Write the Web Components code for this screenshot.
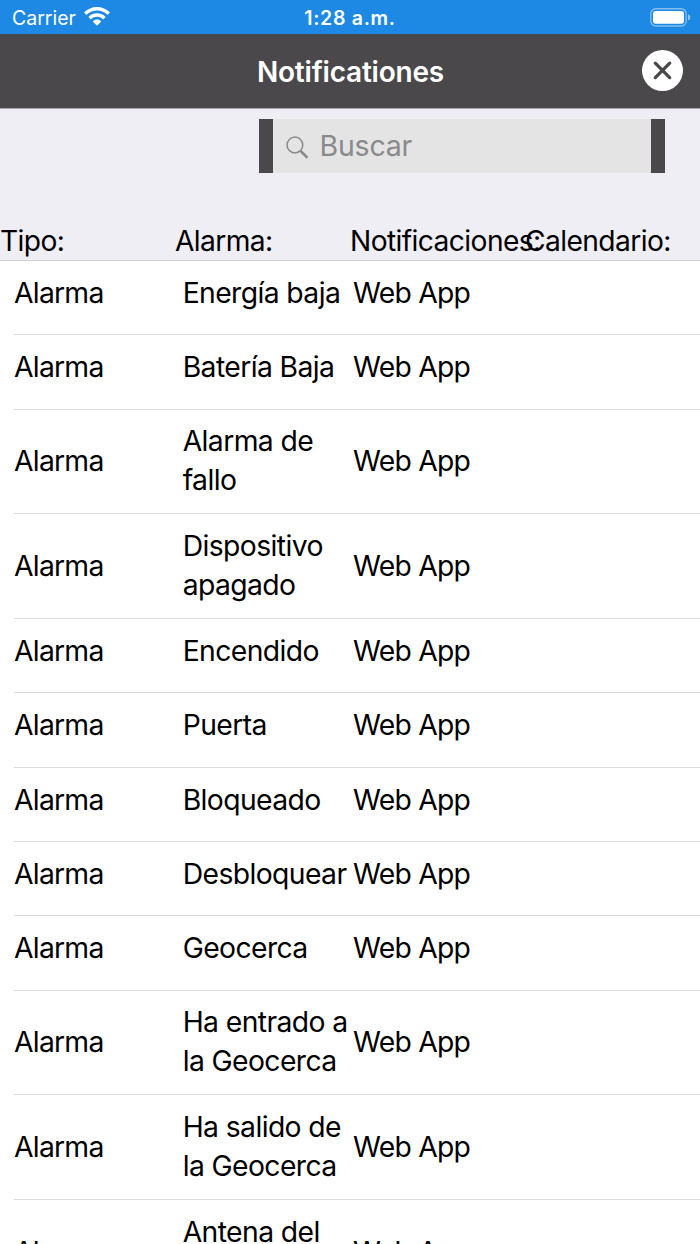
<!DOCTYPE html>
<html lang="es">
<head>
<meta charset="utf-8">
<title>Notificationes</title>
<style>
html, body { margin: 0; height: 100%; overflow: hidden; background: #fff; }
body { font-family: Inter, "Liberation Sans", sans-serif; color: #000; }
</style>
</head>
<body>
<alerts-screen></alerts-screen>
<script>
const define = (name, html, setup) => {
  const tpl = document.createElement('template');
  tpl.innerHTML = html;
  customElements.define(name, class extends HTMLElement {
    constructor() {
      super();
      this.attachShadow({ mode: 'open' }).append(tpl.content.cloneNode(true));
    }
    connectedCallback() { if (setup) setup(this, this.shadowRoot); }
  });
};

define('status-bar', `
<style>
:host { display: grid; grid-template-columns: 1fr auto 1fr; align-items: center; height: 34px; box-sizing: border-box; padding: 2px 9px 0 12px; background: #1e88e5; color: #fff; }
.left { display: flex; align-items: center; gap: 8px; font-size: 19.5px; }
.time { font-size: 19.5px; font-weight: 600; letter-spacing: .7px; margin: 0 1.500px 0 -1.500px; }
.right { display: flex; justify-content: flex-end; }
svg { display: block; }
.wifi { margin-top: -3px; }
.batt { margin-top: -2px; }
</style>
<div class="left"><span>Carrier</span>
<svg class="wifi" width="26" height="19" viewBox="0 0 26 19" fill="#fff">
<path d="M13 0C8 0 3.600 2 .5 5.100a.7.7 0 0 0 0 1l1.500 1.500a.7.7 0 0 0 1 0C5.600 5 9.100 3.500 13 3.500S20.400 5 23 7.600a.7.7 0 0 0 1 0l1.500-1.500a.7.7 0 0 0 0-1C22.400 2 18 0 13 0z"/>
<path d="M13 6.300c-3.200 0-6 1.200-8.200 3.200a.7.7 0 0 0 0 1l1.500 1.500a.7.7 0 0 0 1 0C8.800 10.600 10.800 9.800 13 9.800s4.200.8 5.700 2.200a.7.7 0 0 0 1 0l1.500-1.500a.7.7 0 0 0 0-1C19 7.500 16.200 6.300 13 6.300z"/>
<path d="M13 12.500c-1.500 0-2.800.6-3.800 1.500a.7.7 0 0 0 0 1l3.300 3.300a.7.7 0 0 0 1 0l3.300-3.300a.7.7 0 0 0 0-1c-1-.9-2.300-1.500-3.800-1.500z"/>
</svg></div>
<div class="time">1:28 a.m.</div>
<div class="right"><svg class="batt" width="41" height="19" viewBox="0 0 41 19">
<rect x=".8" y=".8" width="35.400" height="17.200" rx="5" fill="none" stroke="#fff" stroke-opacity=".45" stroke-width="1.400"/>
<rect x="3" y="3" width="31" height="12.800" rx="2.800" fill="#fff"/>
<path d="M38 6.300c1.500.5 2.300 1.700 2.300 3.100S39.500 12 38 12.500z" fill="#fff" fill-opacity=".5"/>
</svg></div>`);

define('nav-bar', `
<style>
:host { display: grid; grid-template-columns: 1fr auto 1fr; align-items: center; height: 75px; box-sizing: border-box; padding-right: 17px; background: #4a484b; border-bottom: 1px solid #a8a7aa; color: #fff; }
h1 { grid-column: 2; margin: 1px -9px 0 9px; font-size: 28px; font-weight: 600; line-height: 34px; letter-spacing: -.2px; }
button { justify-self: end; width: 41px; height: 41px; padding: 0; border: 0; border-radius: 50%; background: #fff; margin-top: -2px; }
svg { display: block; }
</style>
<h1><slot></slot></h1>
<button aria-label="Cerrar"><svg width="41" height="41" viewBox="0 0 41 41" stroke="#4a484b" stroke-width="3.300" stroke-linecap="round"><path d="M13.300 13.200 27.700 27.600M27.700 13.200 13.300 27.600"/></svg></button>`);

define('search-box', `
<style>
:host { display: flex; align-items: center; box-sizing: border-box; width: 406px; height: 54px; margin-left: 259px; padding-left: 12.500px; background: #e4e4e4; border: solid #4a484b; border-width: 0 14px; color: #8a8a8c; }
span { font-size: 28.500px; line-height: 39px; margin-left: 11px; letter-spacing: -.2px; }
svg { display: block; margin-top: 4px; }
</style>
<svg width="23" height="23" viewBox="0 0 23 23" fill="none" stroke="#8a8a8c"><circle cx="8.900" cy="9" r="7.900" stroke-width="1.500"/><path d="m14.300 14.800 7.200 7" stroke-width="2.600"/></svg>
<span><slot></slot></span>`);

define('column-heads', `
<style>
:host { display: grid; grid-template-columns: repeat(4, 175px); white-space: nowrap; font-size: 28.200px; line-height: 39px; letter-spacing: -.600px; }
</style>
<span>Tipo:</span><span>Alarma:</span><span>Notificaciones:</span><span>Calendario:</span>`);

define('alert-row', `
<style>
:host { display: block; padding-left: 14px; }
.row { display: grid; grid-template-columns: 168.700px 170.300px 1fr; align-items: center; align-content: start; box-sizing: border-box; min-height: 74.300px; padding: 12.750px 0 13.050px; border-bottom: 1px solid #dcdcde; font-size: 28.300px; line-height: 39px; letter-spacing: -.6px; white-space: nowrap; }
.kind, .via { letter-spacing: -.750px; }
.name { white-space: pre; }
</style>
<div class="row"><span class="kind">Alarma</span><span class="name"><slot></slot></span><span class="via">Web App</span></div>`);

define('alerts-screen', `
<style>
:host { display: flex; flex-direction: column; height: 1244px; overflow: hidden; }
header { box-sizing: border-box; height: 152px; display: grid; grid-template-rows: 1fr 38px; align-items: start; padding-top: 9.500px; background: #efeef4; border-bottom: 1px solid #d0d0d4; }
main { flex: 1; overflow: hidden; background: #fff; }
</style>
<status-bar></status-bar>
<nav-bar>Notificationes</nav-bar>
<header><search-box>Buscar</search-box><column-heads></column-heads></header>
<main></main>`, (host, root) => {
  const names = ['Energía baja', 'Batería Baja', 'Alarma de\nfallo', 'Dispositivo\napagado', 'Encendido', 'Puerta', 'Bloqueado', 'Desbloquear', 'Geocerca', 'Ha entrado a\nla Geocerca', 'Ha salido de\nla Geocerca', 'Antena del\nGPS'];
  const main = root.querySelector('main');
  for (const n of names) {
    const row = document.createElement('alert-row');
    row.textContent = n;
    main.append(row);
  }
});
</script>
</body>
</html>
